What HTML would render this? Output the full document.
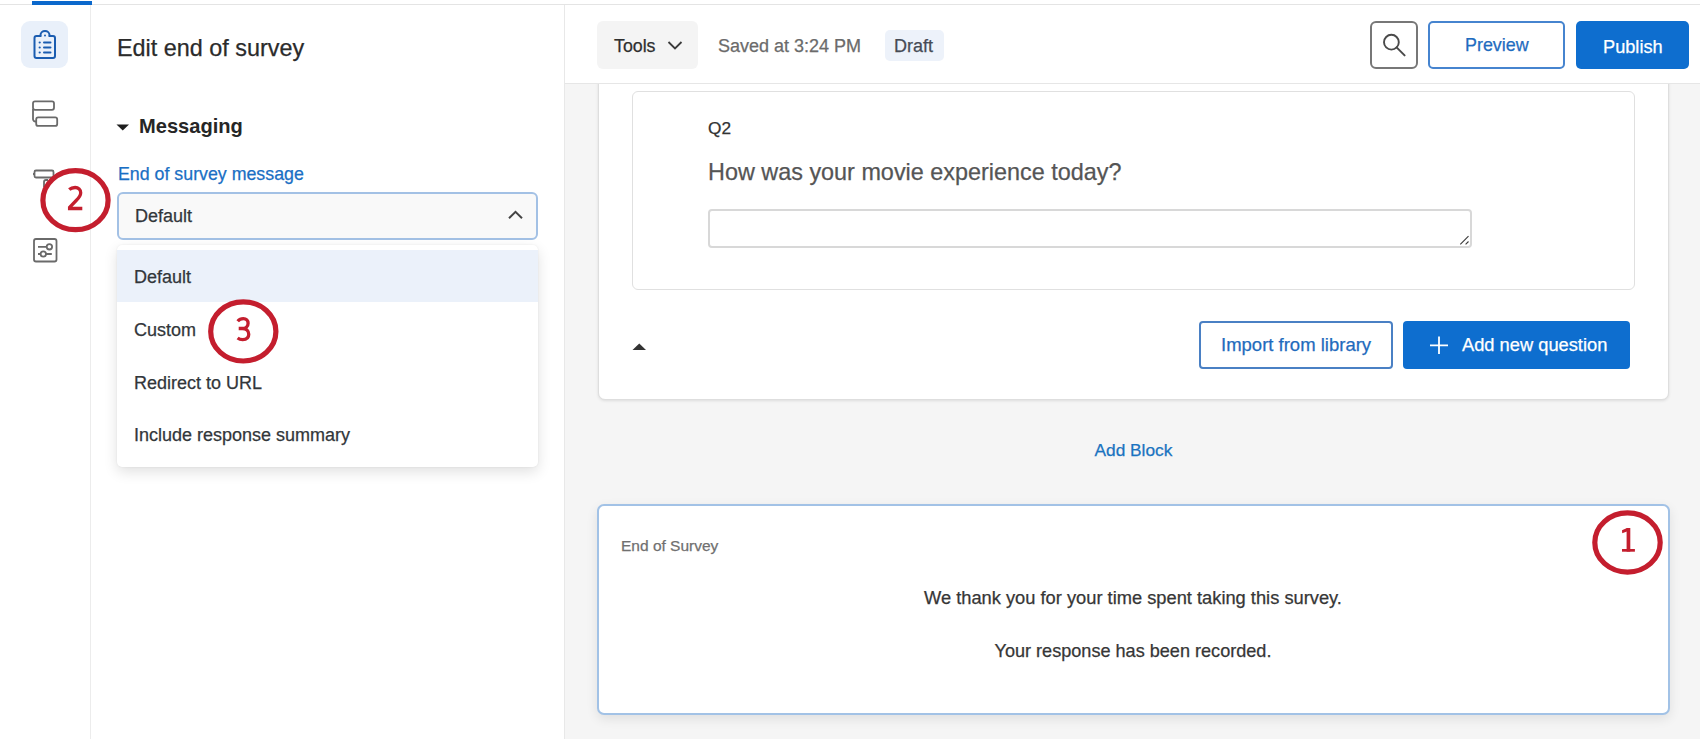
<!DOCTYPE html>
<html><head><meta charset="utf-8">
<style>
*{box-sizing:border-box;margin:0;padding:0}
html,body{width:1700px;height:739px;overflow:hidden;background:#fff;font-family:"Liberation Sans",sans-serif;color:#32363a}
.a{position:absolute}
.t{position:absolute;white-space:nowrap;line-height:1;-webkit-text-stroke:0.25px currentColor}
</style></head><body>
<!-- top strip -->
<div class="a" style="left:0;top:4px;width:1700px;height:1px;background:#e4e4e4"></div>
<div class="a" style="left:32px;top:1px;width:60px;height:4px;background:#0b68cc"></div>
<!-- left nav border -->
<div class="a" style="left:90px;top:5px;width:1px;height:734px;background:#ececec"></div>
<!-- nav icons -->
<div class="a" style="left:21px;top:21px;width:47px;height:47px;border-radius:9px;background:#e9f0fa"></div>
<svg class="a" style="left:0;top:0" width="90" height="280" viewBox="0 0 90 280">
 <g fill="none" stroke="#1a5cb0" stroke-width="2" stroke-linecap="round" stroke-linejoin="round">
  <path d="M40.5 36 H36.5 a2 2 0 0 0 -2 2 V56 a2 2 0 0 0 2 2 H53 a2 2 0 0 0 2 -2 V38 a2 2 0 0 0 -2 -2 H49.5"/>
  <path d="M40.5 36 V35 a4.5 4 0 0 1 9 0 V36"/>
  <path d="M44 42.5 H50.5 M44 47.5 H50.5 M44 52.5 H50.5"/>
 </g>
 <g fill="#1a5cb0"><circle cx="45" cy="35.5" r="1"/><circle cx="39.7" cy="42.5" r="1.1"/><circle cx="39.7" cy="47.5" r="1.1"/><circle cx="39.7" cy="52.5" r="1.1"/></g>
 <g fill="none" stroke="#6a6a6a" stroke-width="1.8" stroke-linejoin="round">
  <rect x="33" y="101.3" width="21" height="8.5" rx="2"/>
  <rect x="36.2" y="117.4" width="21" height="8.5" rx="2"/>
  <path d="M33 109 V119 a2.5 2.5 0 0 0 2.5 2.5 H36.2"/>
  <rect x="34.5" y="170.5" width="19" height="7" rx="1.5"/>
  <path d="M34.5 174 H33"/>
  <path d="M44 187 V182 a2 2 0 0 1 2 -2 H48"/>
  <rect x="34" y="239" width="22.5" height="22.5" rx="2"/>
  <path d="M38 246.8 H46.6 M52.2 246.8 H52.5 M38 254 H40.5 M46 254 H51.8"/>
  <circle cx="49.4" cy="246.8" r="2.7"/>
  <circle cx="43.3" cy="254" r="2.7"/>
 </g>
</svg>
<!-- left panel -->
<div class="a" style="left:564px;top:5px;width:1px;height:734px;background:#e8e8e8"></div>
<div class="t" style="left:117px;top:36.9px;font-size:23.4px;color:#2b2b2b">Edit end of survey</div>
<svg class="a" style="left:116px;top:124px" width="14" height="7"><path d="M0.5 0.5 H13 L6.75 6.5Z" fill="#1e1e1e"/></svg>
<div class="t" style="left:139px;top:116px;font-size:20.1px;font-weight:bold;color:#262626;-webkit-text-stroke:0">Messaging</div>
<div class="t" style="left:118px;top:166px;font-size:17.8px;color:#1a6fc4">End of survey message</div>
<div class="a" style="left:117px;top:192px;width:421px;height:48px;border:2px solid #a3c1e5;border-radius:6px;background:#f9f9f9"></div>
<div class="t" style="left:135px;top:207.3px;font-size:18px;color:#32363a">Default</div>
<svg class="a" style="left:507px;top:209px" width="17" height="11"><path d="M2 9.2 L8.5 2.9 L15 9.2" fill="none" stroke="#444" stroke-width="2"/></svg>
<!-- dropdown -->
<div class="a" style="left:117px;top:245px;width:421px;height:222px;background:#fff;border-radius:5px;box-shadow:0 5px 14px rgba(0,0,0,0.12),0 0 2px rgba(0,0,0,0.08);overflow:hidden">
 <div class="a" style="left:0;top:5px;width:421px;height:51.5px;background:#ebf1fa"></div>
</div>
<div class="t" style="left:134px;top:267.8px;font-size:18px;color:#32363a">Default</div>
<div class="t" style="left:134px;top:321.3px;font-size:18px;color:#32363a">Custom</div>
<div class="t" style="left:134px;top:373.7px;font-size:18px;color:#32363a">Redirect to URL</div>
<div class="t" style="left:134px;top:426px;font-size:18px;color:#32363a">Include response summary</div>

<!-- main gray bg -->
<div class="a" style="left:565px;top:82px;width:1135px;height:657px;background:#f5f5f5"></div>
<!-- canvas block -->
<div class="a" style="left:598px;top:40px;width:1071px;height:360px;background:#fff;border:1px solid #dedede;border-radius:7px;box-shadow:0 1px 3px rgba(0,0,0,0.10)"></div>
<div class="a" style="left:632px;top:91px;width:1003px;height:199px;border:1px solid #e0e0e0;border-radius:6px;background:#fff"></div>
<div class="t" style="left:708px;top:119.8px;font-size:17.3px;color:#333">Q2</div>
<div class="t" style="left:708px;top:160.5px;font-size:23.4px;color:#555">How was your movie experience today?</div>
<div class="a" style="left:708px;top:209px;width:764px;height:39px;border:2px solid #d8d8d8;border-radius:4px;background:#fff"></div>
<svg class="a" style="left:1456px;top:232px" width="14" height="14"><path d="M12.5 4.2 L4.3 12.4 M12.5 9.5 L9.6 12.4" stroke="#3a3a3a" stroke-width="1.1"/></svg>
<svg class="a" style="left:632px;top:343px" width="15" height="8"><path d="M0.5 7 H14 L7.25 0.5Z" fill="#333"/></svg>
<div class="a" style="left:1199px;top:321px;width:194px;height:48px;border:2px solid #4a80c4;border-radius:4px;background:#fff"></div>
<div class="t" style="left:1221px;top:336.2px;font-size:18.5px;color:#1f6bbd">Import from library</div>
<div class="a" style="left:1403px;top:321px;width:227px;height:48px;border-radius:4px;background:#0e6ecf"></div>
<svg class="a" style="left:1428px;top:335px" width="22" height="22"><path d="M11 1.6 V19 M2 10.3 H20" stroke="#fff" stroke-width="1.8"/></svg>
<div class="t" style="left:1462px;top:336.2px;font-size:18.3px;color:#fff">Add new question</div>
<div class="t" style="left:1094.5px;top:442.2px;font-size:17.3px;color:#1a73c0">Add Block</div>

<!-- end of survey block -->
<div class="a" style="left:597px;top:504px;width:1073px;height:211px;border:2px solid #a2c2e6;border-radius:7px;background:#fff;box-shadow:0 4px 12px rgba(0,0,0,0.09)"></div>
<div class="t" style="left:621px;top:538.3px;font-size:15.5px;color:#707070">End of Survey</div>
<div class="t" style="left:924px;top:589px;font-size:18.3px;color:#363636">We thank you for your time spent taking this survey.</div>
<div class="t" style="left:994.5px;top:641.8px;font-size:18.1px;color:#363636">Your response has been recorded.</div>

<!-- header -->
<div class="a" style="left:565px;top:5px;width:1135px;height:79px;background:#fff;border-bottom:1px solid #e6e6e6"></div>
<div class="a" style="left:597px;top:21px;width:101px;height:48px;border-radius:6px;background:#f4f4f4"></div>
<div class="t" style="left:614px;top:37.7px;font-size:17.8px;color:#2f2f2f">Tools</div>
<svg class="a" style="left:667px;top:40px" width="16" height="11"><path d="M1.5 2 L8 8.5 L14.5 2" fill="none" stroke="#3a3a3a" stroke-width="1.8"/></svg>
<div class="t" style="left:718px;top:36.9px;font-size:18px;color:#6b6b6b">Saved at 3:24 PM</div>
<div class="a" style="left:884.5px;top:29.5px;width:59.5px;height:31px;border-radius:5px;background:#edf2fa"></div>
<div class="t" style="left:894px;top:36.9px;font-size:18px;color:#464b55">Draft</div>
<div class="a" style="left:1370px;top:21px;width:48px;height:48px;border:2px solid #777;border-radius:6px;background:#fff"></div>
<svg class="a" style="left:1370px;top:21px" width="48" height="48"><circle cx="21.4" cy="21.2" r="7.4" fill="none" stroke="#4a4a4a" stroke-width="1.9"/><path d="M26.6 26.4 L34.6 34.4" stroke="#4a4a4a" stroke-width="2" stroke-linecap="round"/></svg>
<div class="a" style="left:1428px;top:21px;width:137px;height:48px;border:2px solid #4684cf;border-radius:5px;background:#fff"></div>
<div class="t" style="left:1465px;top:37.1px;font-size:17.9px;color:#1f6cc0">Preview</div>
<div class="a" style="left:1576px;top:21px;width:113px;height:48px;border-radius:5px;background:#0e6ecf"></div>
<div class="t" style="left:1603px;top:37.6px;font-size:18.2px;color:#fff">Publish</div>

<!-- annotations -->
<svg class="a" style="left:0;top:0" width="1700" height="739">
 <g fill="none" stroke="#c41e2e" stroke-width="5.2">
  <ellipse cx="75.5" cy="200.2" rx="32.6" ry="29.5"/>
  <ellipse cx="243.3" cy="331.4" rx="32.6" ry="29.6"/>
  <ellipse cx="1627.5" cy="542.5" rx="32.7" ry="29.6"/>
 </g>
</svg>
<svg class="a" style="left:0;top:0" width="1700" height="739">
 <g fill="none" stroke="#c41e2e" stroke-width="3.3" stroke-linecap="butt" stroke-linejoin="miter">
  <path transform="translate(68,186)" d="M1.2 3.6 C2.8 2.2 4.9 1.5 7.1 1.5 C10.4 1.5 12.7 3.6 12.7 6.7 C12.7 9.6 11 11.7 8.2 14.5 L1.6 21.3 V22.5 H14.3"/>
  <path transform="translate(236.3,316.9)" d="M1.4 4.3 C2.9 2.5 4.8 1.65 7 1.65 C10 1.65 11.8 3.6 11.8 6.3 C11.8 9.5 9.5 11.6 6 11.6 H2.4 M6 11.6 C10.2 11.6 12.45 14 12.45 17.4 C12.45 21 9.8 22.65 6.4 22.65 C4.3 22.65 2.6 22.1 1.3 21.1"/>
 </g>
 <g fill="#c41e2e" transform="translate(1622,528)">
  <rect x="4.6" y="0" width="3.7" height="23.6"/>
  <rect x="0" y="21" width="12.9" height="2.7"/>
  <path d="M0 2.2 L5 0 V3.6 L0.2 5.3 Z"/>
 </g>
</svg>
</body></html>
